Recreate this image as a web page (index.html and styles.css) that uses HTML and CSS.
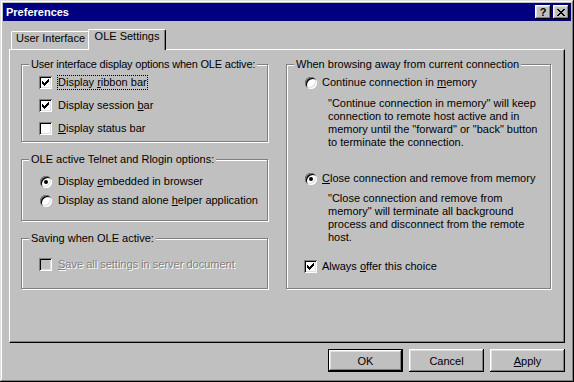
FILE: index.html
```html
<!DOCTYPE html>
<html lang="en">

<head>
    <meta charset="UTF-8">
    <title>Preferences</title>
    <link rel="stylesheet" href="styles.css">
</head>

<body>
    <div class="window">
        <div class="titlebar">
            <span class="title">Preferences</span>
            <div class="caption-buttons">
                <button class="caption-btn">?</button>
                <button class="caption-btn">
                    <svg width="8" height="7" viewBox="0 0 8 7">
                        <path d="M0 0h2v1H0zM6 0h2v1H6zM1 1h2v1H1zM5 1h2v1H5zM2 2h4v1H2zM3 3h2v1H3zM2 4h4v1H2zM1 5h2v1H1zM5 5h2v1H5zM0 6h2v1H0zM6 6h2v1H6z" />
                    </svg>
                </button>
            </div>
        </div>

        <div class="dialog-body">
            <div class="tabs">
                <div class="tab">User Interface</div>
                <div class="tab active">OLE Settings</div>
            </div>

            <div class="tab-panel">
                <div class="col-left">
                    <fieldset class="group group-display">
                        <legend>User interface display options when OLE active:</legend>
                        <div class="option">
                            <span class="checkbox"><svg class="check" width="7" height="7" viewBox="0 0 7 7"><path d="M0 2H1V3H2V4H3V3H4V2H5V1H6V0H7V3H6V4H5V5H4V6H3V7H2V6H1V5H0Z" /></svg></span>
                            <span class="label focused">Display <u>r</u>ibbon bar</span>
                        </div>
                        <div class="option">
                            <span class="checkbox"><svg class="check" width="7" height="7" viewBox="0 0 7 7"><path d="M0 2H1V3H2V4H3V3H4V2H5V1H6V0H7V3H6V4H5V5H4V6H3V7H2V6H1V5H0Z" /></svg></span>
                            <span class="label">Display session <u>b</u>ar</span>
                        </div>
                        <div class="option">
                            <span class="checkbox"></span>
                            <span class="label"><u>D</u>isplay status bar</span>
                        </div>
                    </fieldset>

                    <fieldset class="group group-telnet">
                        <legend>OLE active Telnet and Rlogin options:</legend>
                        <div class="option">
                            <span class="radio checked"></span>
                            <span class="label">Display <u>e</u>mbedded in browser</span>
                        </div>
                        <div class="option">
                            <span class="radio"></span>
                            <span class="label">Display as stand alone <u>h</u>elper application</span>
                        </div>
                    </fieldset>

                    <fieldset class="group group-saving">
                        <legend>Saving when OLE active:</legend>
                        <div class="option disabled">
                            <span class="checkbox"></span>
                            <span class="label"><u>S</u>ave all settings in server document</span>
                        </div>
                    </fieldset>
                </div>

                <fieldset class="group group-browse">
                    <legend>When browsing away from current connection</legend>
                    <div class="option">
                        <span class="radio"></span>
                        <span class="label">Continue connection in <u>m</u>emory</span>
                    </div>
                    <p class="desc desc-first">"Continue connection in memory" will keep<br>connection to remote host active and in<br>memory until the "forward" or "back" button<br>to terminate the connection.</p>
                    <div class="option option-close">
                        <span class="radio checked"></span>
                        <span class="label"><u>C</u>lose connection and remove from memory</span>
                    </div>
                    <p class="desc">"Close connection and remove from<br>memory" will terminate all background<br>process and disconnect from the remote<br>host.</p>
                    <div class="option option-always">
                        <span class="checkbox"><svg class="check" width="7" height="7" viewBox="0 0 7 7"><path d="M0 2H1V3H2V4H3V3H4V2H5V1H6V0H7V3H6V4H5V5H4V6H3V7H2V6H1V5H0Z" /></svg></span>
                        <span class="label">Always <u>o</u>ffer this choice</span>
                    </div>
                </fieldset>
            </div>

            <div class="buttons">
                <button class="btn default">OK</button>
                <button class="btn">Cancel</button>
                <button class="btn"><u>A</u>pply</button>
            </div>
        </div>
    </div>
</body>

</html>
```

FILE: styles.css
```css
:root {
    --face: #c0c0c0;
    --light: #dfdfdf;
    --shadow: #808080;
    --navy: #000080;
}

* {
    box-sizing: border-box;
}

body {
    margin: 0;
    background: var(--face);
    font-family: 'Liberation Sans', Arial, sans-serif;
    font-size: 11px;
    line-height: 13px;
    color: #000;
}

.window {
    width: 574px;
    height: 382px;
    padding: 3px;
    background: var(--face);
    box-shadow: inset -1px -1px #000, inset 1px 1px var(--light),
        inset -2px -2px var(--shadow), inset 2px 2px #fff;
}

/* title bar */
.titlebar {
    display: flex;
    align-items: center;
    justify-content: space-between;
    height: 18px;
    padding: 0 2px 0 3px;
    background: var(--navy);
    color: #fff;
}

.title {
    font-weight: bold;
}

.caption-buttons {
    display: flex;
    gap: 2px;
}

.caption-btn {
    display: flex;
    align-items: center;
    justify-content: center;
    width: 16px;
    height: 14px;
    padding: 0;
    border: none;
    background: var(--face);
    color: #000;
    font: bold 11px/1 'Liberation Sans', Arial, sans-serif;
    box-shadow: inset -1px -1px #000, inset 1px 1px #fff,
        inset -2px -2px var(--shadow), inset 2px 2px var(--light);
}

.caption-btn svg {
    display: block;
    fill: #000;
}

/* tabs */
.dialog-body {
    padding: 8px 6px 0;
}

.tabs {
    display: flex;
    align-items: flex-end;
    height: 20px;
    padding-left: 2px;
}

.tab {
    width: 79px;
    height: 18px;
    border: 1px solid #fff;
    border-right-color: #000;
    border-bottom: none;
    border-radius: 2px 2px 0 0;
    box-shadow: inset -1px 0 var(--shadow);
    text-align: center;
}

.tab.active {
    position: relative;
    z-index: 1;
    width: 78px;
    height: 21px;
    margin-left: -2px;
    margin-bottom: -1px;
    background: var(--face);
}

.tab-panel {
    display: flex;
    align-items: flex-start;
    gap: 18px;
    height: 294px;
    padding: 8px 0 0 11px;
    border: 1px solid;
    border-color: #fff #000 #000 #fff;
    box-shadow: inset -1px -1px var(--shadow);
}

/* group boxes */
.col-left {
    display: flex;
    flex-direction: column;
    gap: 11px;
    width: 247px;
}

.group {
    min-width: 0;
    margin: 0;
    padding: 0 7px;
    border: 1px solid var(--shadow);
    box-shadow: inset 1px 1px #fff, 1px 1px #fff;
}

.group legend {
    padding: 0 2px;
    background: var(--face);
    white-space: nowrap;
}

.group-display legend {
    letter-spacing: -0.2px;
}

.group-display {
    padding-top: 5px;
    padding-bottom: 6px;
}

.group-display .option + .option {
    margin-top: 10px;
}

.group-telnet {
    padding-top: 9px;
    padding-bottom: 13px;
}

.group-telnet .option + .option {
    margin-top: 6px;
}

.group-saving {
    padding-top: 13px;
    padding-bottom: 17px;
}

.group-browse {
    width: 265px;
    padding-top: 5px;
    padding-bottom: 15px;
}

/* checkboxes and radios */
.option {
    display: flex;
    align-items: center;
    gap: 6px;
    height: 13px;
    padding-left: 10px;
    white-space: nowrap;
}

.group-browse .option {
    gap: 5px;
}

.checkbox {
    display: flex;
    align-items: center;
    justify-content: center;
    flex: none;
    width: 13px;
    height: 13px;
    background: #fff;
    box-shadow: inset 1px 1px var(--shadow), inset -1px -1px #fff,
        inset 2px 2px #000, inset -2px -2px var(--light);
}

.check {
    display: block;
    fill: #000;
}

.radio {
    display: flex;
    align-items: center;
    justify-content: center;
    flex: none;
    width: 12px;
    height: 12px;
    margin-left: 1px;
    border-radius: 50%;
    background: #fff;
    box-shadow: inset 1px 1px var(--shadow), inset -1px -1px #fff,
        inset 2px 2px #000, inset -2px -2px var(--light);
}

.radio.checked::after {
    content: "";
    width: 4px;
    height: 4px;
    border-radius: 50%;
    background: #000;
}

.label.focused {
    outline: 1px dotted #000;
}

.option.disabled .checkbox {
    background: var(--face);
}

.option.disabled .label {
    color: var(--shadow);
    text-shadow: 1px 1px #fff;
}

.desc {
    margin: 7px 0 0;
    padding-left: 34px;
    white-space: nowrap;
}

.desc-first {
    margin-top: 8px;
}

.option-close {
    margin-top: 23px;
}

.option-always {
    margin-top: 16px;
}

/* dialog buttons */
.buttons {
    display: flex;
    justify-content: flex-end;
    gap: 6px;
    margin-top: 6px;
}

.btn {
    width: 75px;
    height: 23px;
    padding: 0;
    border: none;
    background: var(--face);
    color: #000;
    font: 11px 'Liberation Sans', Arial, sans-serif;
    box-shadow: inset -1px -1px #000, inset 1px 1px #fff,
        inset -2px -2px var(--shadow), inset 2px 2px var(--light);
}

.btn.default {
    box-shadow: inset 0 0 0 1px #000, inset -2px -2px #000, inset 2px 2px #fff,
        inset -3px -3px var(--shadow), inset 3px 3px var(--light);
}
```
